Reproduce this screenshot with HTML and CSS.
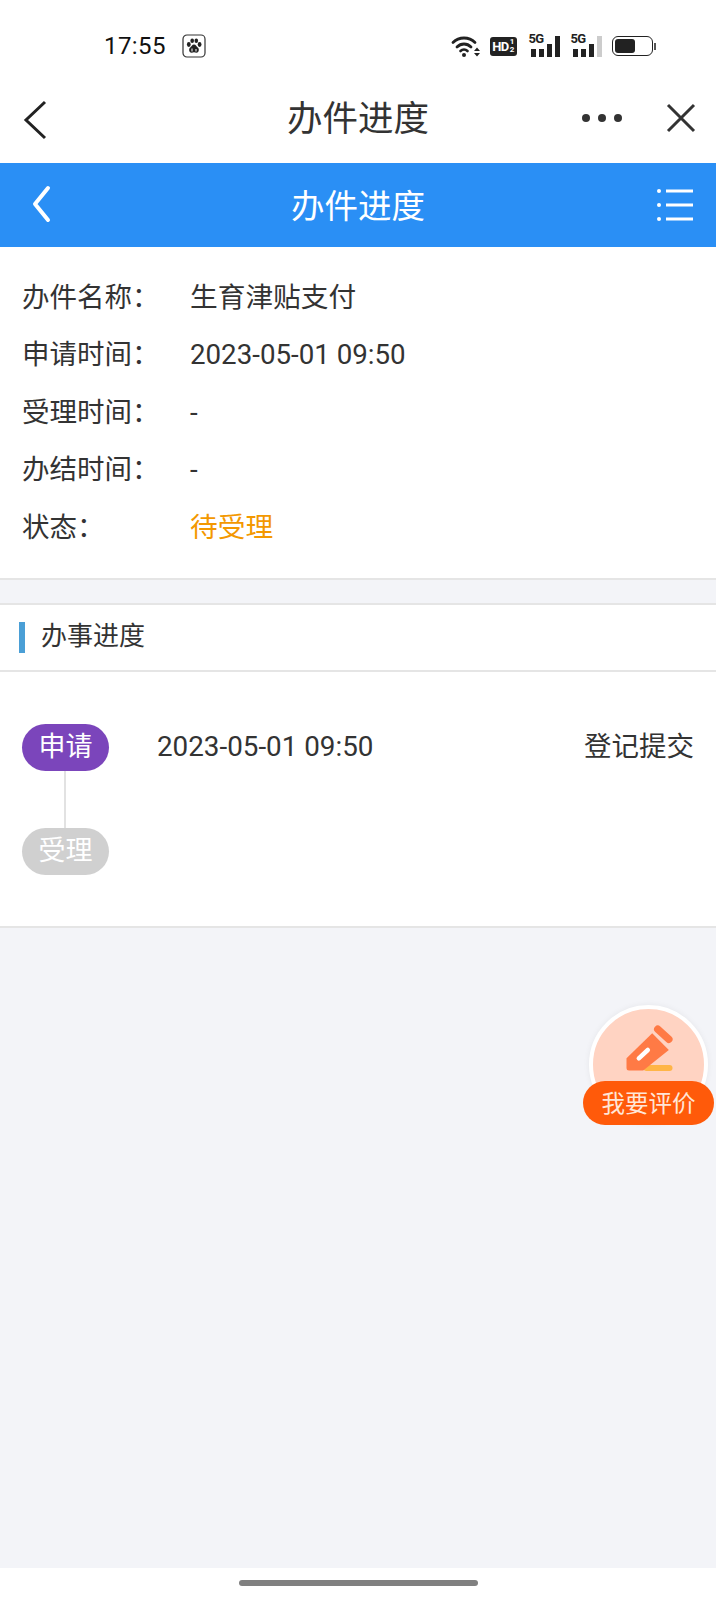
FILE: index.html
```html
<!DOCTYPE html>
<html lang="zh">
<head>
<meta charset="utf-8">
<title>办件进度</title>
<link rel="stylesheet" href="styles.css">
</head>
<body>
<div class="page">
  <header class="status">
    <div class="status-left">
      <span class="clock">17:55</span>
      <svg class="paw" viewBox="0 0 24 24" width="24" height="24">
        <rect x="1" y="1" width="22" height="22" rx="4" fill="#fff" stroke="#333" stroke-width="1.2"/>
        <ellipse cx="6.800" cy="10.500" rx="1.900" ry="2.400" fill="#222"/>
        <ellipse cx="10.200" cy="6.800" rx="1.800" ry="2.300" fill="#222"/>
        <ellipse cx="14.300" cy="6.800" rx="1.800" ry="2.300" fill="#222"/>
        <ellipse cx="17.600" cy="10.500" rx="1.900" ry="2.400" fill="#222"/>
        <path d="M12 10.500c-2 0-2.500 2-4 3.200-1.500 1.300-1 5.300 2 5 1-.1 1.300-.4 2-.4s1 .3 2 .4c3 .3 3.500-3.700 2-5-1.500-1.200-2-3.200-4-3.200z" fill="#222"/>
        <path d="M10 14.500v3M14 15v2.500" stroke="#fff" stroke-width="1" fill="none"/>
      </svg>
    </div>
    <div class="status-right">
      <svg class="wifi" viewBox="0 0 30 24" width="30" height="24">
        <path d="M2 8.500C8 2.500 18 2.500 24 8.500" fill="none" stroke="#222" stroke-width="2.800" stroke-linecap="round"/>
        <path d="M6 13c4-4 10-4 14 0" fill="none" stroke="#222" stroke-width="2.800" stroke-linecap="round"/>
        <path d="M9.500 17c2-2 5-2 7 0" fill="none" stroke="#222" stroke-width="2.600" stroke-linecap="round"/>
        <circle cx="13" cy="21" r="2" fill="#222"/>
        <path d="M23 17h6l-3-3.500zM23 19h6l-3 3.500z" fill="#222"/>
      </svg>
      <span class="hd">HD<span class="hd-num">1<br>2</span></span>
      <span class="signal">
        <span class="five-g">5G</span>
        <span class="bar b1"></span><span class="bar b2"></span><span class="bar b3"></span><span class="bar b4"></span>
      </span>
      <span class="signal">
        <span class="five-g">5G</span>
        <span class="bar b1"></span><span class="bar b2"></span><span class="bar b3"></span><span class="bar b4 off"></span>
      </span>
      <span class="battery"><span class="battery-fill"></span></span>
      <span class="battery-tip"></span>
    </div>
  </header>

  <nav class="toolbar">
    <div class="tb-side">
      <svg class="tb-back" viewBox="0 0 26 40" width="26" height="40"><path d="M23 2 4 20l19 18" fill="none" stroke="#222" stroke-width="3"/></svg>
    </div>
    <h1 class="tb-title">办件进度</h1>
    <div class="tb-side tb-actions">
      <span class="tb-dots"><i></i><i></i><i></i></span>
      <svg class="tb-close" viewBox="0 0 30 30" width="30" height="30"><path d="M2 2l26 26M28 2 2 28" stroke="#333" stroke-width="3" fill="none"/></svg>
    </div>
  </nav>

  <div class="appbar">
    <div class="ab-side">
      <svg class="ab-back" viewBox="0 0 24 38" width="24" height="38"><path d="M19 3 6 19l13 16" fill="none" stroke="#fff" stroke-width="4" stroke-linecap="round" stroke-linejoin="round"/></svg>
    </div>
    <h2 class="ab-title">办件进度</h2>
    <div class="ab-side ab-right">
      <svg class="ab-menu" viewBox="0 0 36 34" width="36" height="34">
        <g fill="#fff"><circle cx="2" cy="3" r="2"/><circle cx="2" cy="17" r="2"/><circle cx="2" cy="31" r="2"/></g>
        <path d="M9 3h27M9 17h27M9 31h27" stroke="#fff" stroke-width="3"/>
      </svg>
    </div>
  </div>

  <main class="main">
    <section class="info">
      <div class="info-row"><span class="info-label">办件名称：</span><span class="info-value">生育津贴支付</span></div>
      <div class="info-row"><span class="info-label">申请时间：</span><span class="info-value">2023-05-01 09:50</span></div>
      <div class="info-row"><span class="info-label">受理时间：</span><span class="info-value">-</span></div>
      <div class="info-row"><span class="info-label">办结时间：</span><span class="info-value">-</span></div>
      <div class="info-row"><span class="info-label">状态：</span><span class="info-value pending">待受理</span></div>
    </section>

    <section class="progress-head"><span class="head-mark"></span><span class="head-text">办事进度</span></section>

    <section class="timeline">
      <div class="step">
        <span class="pill done">申请</span>
        <span class="step-time">2023-05-01 09:50</span>
        <span class="step-text">登记提交</span>
      </div>
      <div class="connector"></div>
      <div class="step">
        <span class="pill todo">受理</span>
      </div>
    </section>
  </main>

  <footer class="gesture"><span class="gesture-bar"></span></footer>

  <div class="rate">
    <div class="rate-circle">
      <svg viewBox="0 0 60 60" width="60" height="60">
        <rect x="24.500" y="45" width="29" height="6" rx="3" fill="#ffb547"/>
        <path d="M7.500 38.300 33.200 13.300 49.800 30 24.200 50.500H10a2.500 2.500 0 0 1-2.500-2.500z" fill="#ff7a45"/>
        <path d="M38.800 9.300 49.800 19.300" stroke="#ff7a45" stroke-width="7.500" stroke-linecap="round"/>
        <path d="M19.800 38.300 28.800 30" stroke="#fff" stroke-width="4.500" stroke-linecap="round"/>
      </svg>
    </div>
    <span class="rate-label">我要评价</span>
  </div>
</div>
</body>
</html>
```

FILE: styles.css
```css
* { box-sizing: border-box; }
html, body { margin: 0; padding: 0; }
body {
  font-family: Roboto, "Noto Sans CJK SC", sans-serif;
  color: #333;
  background: #fff;
}
.page {
  position: relative;
  width: 716px;
  height: 1600px;
  display: flex;
  flex-direction: column;
  overflow: hidden;
}

/* status bar */
.status {
  height: 82px;
  padding: 10px 60px 0 104px;
  display: flex;
  justify-content: space-between;
  align-items: center;
}
.status-left { display: flex; align-items: center; gap: 16px; }
.clock { font-size: 24px; color: #111; letter-spacing: 0.4px; }
.status-right { display: flex; align-items: center; }
.wifi { margin-right: 9px; }
.hd {
  display: flex;
  align-items: center;
  justify-content: center;
  width: 27px;
  height: 19px;
  background: #222;
  border-radius: 3px;
  color: #fff;
  font-size: 13px;
  font-weight: 700;
  letter-spacing: -0.5px;
  line-height: 1;
  margin-right: 12px;
}
.hd-num { font-size: 8px; line-height: 8px; margin-left: 1px; text-align: center; }
.signal {
  position: relative;
  display: flex;
  align-items: flex-end;
  gap: 3.500px;
  width: 31px;
  height: 22px;
  padding-left: 2.500px;
  margin-right: 11px;
}
.signal + .signal { margin-right: 10px; }
.five-g {
  position: absolute;
  left: 0;
  top: -2px;
  font-size: 13px;
  font-weight: 700;
  letter-spacing: -0.6px;
  line-height: 12px;
  color: #222;
}
.bar { width: 4.500px; background: #222; }
.b1 { height: 8px; }
.b2 { height: 8px; }
.b3 { height: 13px; }
.b4 { height: 21px; }
.off { background: #ccc; }
.battery {
  display: block;
  width: 41px;
  height: 20px;
  border: 1.500px solid #222;
  border-radius: 6px;
  padding: 2px;
}
.battery-fill {
  display: block;
  width: 20px;
  height: 100%;
  background: #222;
  border-radius: 3px;
}
.battery-tip { width: 2px; height: 7px; margin-left: 1.500px; background: #555; }

/* white title bar */
.toolbar {
  height: 81px;
  display: grid;
  grid-template-columns: 1fr auto 1fr;
  align-items: center;
  padding: 0 20px 5px 20px;
}
.tb-side { display: flex; align-items: center; }
.tb-back { margin-left: 2px; }
.tb-actions { justify-content: flex-end; gap: 44px; padding-bottom: 5px; }
.tb-title {
  margin: 0;
  font-size: 35.500px;
  font-weight: 400;
  color: #333;
  line-height: 1;
}
.tb-dots { display: flex; gap: 8px; }
.tb-dots i { width: 8px; height: 8px; border-radius: 50%; background: #333; }

/* blue bar */
.appbar {
  height: 84px;
  background: #2a8ff5;
  display: grid;
  grid-template-columns: 1fr auto 1fr;
  align-items: center;
  padding: 0 23px;
}
.ab-side { display: flex; align-items: center; }
.ab-right { justify-content: flex-end; }
.ab-back { margin: -3px 0 0 6px; }
.ab-title {
  margin: 4px 0 0;
  font-size: 33.500px;
  font-weight: 400;
  color: #fff;
  line-height: 1;
}

/* content */
.main { flex: 1; background: #f3f4f8; }
.info {
  background: #fff;
  padding: 22.500px 22px 20.500px;
  border-bottom: 2px solid #e5e5e5;
}
.info-row {
  display: flex;
  height: 57.500px;
  align-items: baseline;
  line-height: 56px;
  font-size: 27.500px;
}
.info-label { width: 168px; }
.info-value { font-size: 27.700px; }
.pending { color: #f39800; }

.progress-head {
  margin-top: 23px;
  height: 69px;
  background: #fff;
  border-top: 2px solid #e5e5e5;
  border-bottom: 2px solid #e5e5e5;
  display: flex;
  align-items: center;
  padding-left: 19px;
}
.head-mark { width: 6px; height: 31px; background: #4a9fd6; margin-right: 16px; }
.head-text { font-size: 26px; line-height: 1; padding-bottom: 2px; }

.timeline {
  background: #fff;
  padding: 52px 22px 51px;
  border-bottom: 2px solid #e5e5e5;
}
.step { display: flex; align-items: center; }
.pill {
  width: 87px;
  height: 47px;
  border-radius: 24px;
  display: flex;
  align-items: center;
  justify-content: center;
  color: #fff;
  font-size: 27px;
  line-height: 1;
}
.done { background: #7b45bb; }
.todo { background: #d0d0d0; }
.step-time { margin-left: 48px; font-size: 27.800px; line-height: 1; flex: 1; }
.step-text { font-size: 27.500px; line-height: 1; }
.connector { width: 2px; height: 57px; margin-left: 42px; background: #e2e2e2; }

/* gesture bar */
.gesture {
  height: 32px;
  background: #fff;
  display: flex;
  justify-content: center;
  padding-top: 12px;
}
.gesture-bar { width: 239px; height: 6px; border-radius: 3px; background: #808080; }

/* floating button */
.rate {
  position: absolute;
  left: 583px;
  top: 1005px;
  width: 133px;
  height: 120px;
}
.rate-circle {
  position: absolute;
  left: 6px;
  top: 0;
  width: 119px;
  height: 119px;
  border-radius: 50%;
  background: #ffd3c2;
  border: 4px solid #fff;
  box-shadow: 0 0 6px rgba(0, 0, 0, 0.06);
  display: flex;
  justify-content: center;
  padding-top: 11px;
}
.rate-label {
  position: absolute;
  left: 0;
  bottom: 0;
  width: 131px;
  height: 44px;
  border-radius: 22px;
  background: #ff5a0a;
  color: #ffe6d8;
  font-size: 23.500px;
  line-height: 1;
  padding-top: 3px;
  display: flex;
  align-items: center;
  justify-content: center;
}
```
